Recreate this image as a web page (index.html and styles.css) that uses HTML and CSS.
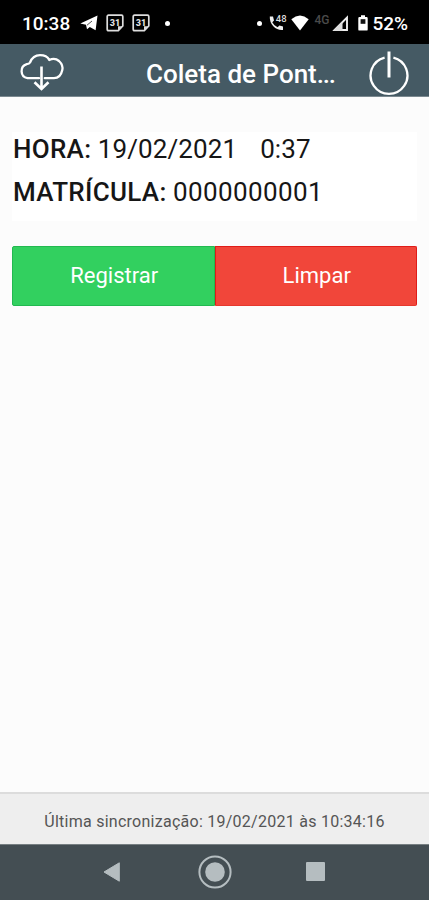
FILE: index.html
```html
<!DOCTYPE html>
<html lang="pt-BR">
<head>
  <meta charset="UTF-8" />
  <meta name="viewport" content="width=device-width, initial-scale=1.0"/>
  <title>Coleta de Ponto</title>
  <link rel="stylesheet" href="styles.css">
</head>
<body>

  <div class="status-bar">
    <span class="clock">10:38</span>
    <svg class="telegram" width="18" height="16" viewBox="0 0 18 16">
      <path d="M0.3 8.4L17.5 0.5L15.6 15.2L9.8 12L7 14.3L6 9.8Z" fill="#fff"/>
      <path d="M7 10.2L12 6" stroke="#000" stroke-width="0.7"/>
    </svg>
    <svg class="calendar" width="18" height="18" viewBox="0 0 18 18">
      <path d="M2.5 1.2H15.5Q16.8 1.2 16.8 2.5V12L12.3 16.6H2.5Q1.2 16.6 1.2 15.3V2.5Q1.2 1.2 2.5 1.2Z" fill="none" stroke="#ddd" stroke-width="1.7"/>
      <path d="M12 16.5V12.3H16.5Z" fill="#ddd"/>
      <text x="9" y="12.2" text-anchor="middle">31</text>
    </svg>
    <svg class="calendar" width="18" height="18" viewBox="0 0 18 18">
      <path d="M2.5 1.2H15.5Q16.8 1.2 16.8 2.5V12L12.3 16.6H2.5Q1.2 16.6 1.2 15.3V2.5Q1.2 1.2 2.5 1.2Z" fill="none" stroke="#ddd" stroke-width="1.7"/>
      <path d="M12 16.5V12.3H16.5Z" fill="#ddd"/>
      <text x="9" y="12.2" text-anchor="middle">31</text>
    </svg>
    <span class="dot"></span>

    <div class="status-right">
      <span class="dot"></span>
      <svg class="call" width="18" height="18" viewBox="0 0 18 18">
        <path d="M0.8 2.5H4L5 6.4L3.3 8.2Q5 11.8 8.6 13.3L10.4 11.6L14 12.6V16Q8.5 16.6 4.3 12.3Q0.5 8.2 0.8 2.5Z" fill="#eee"/>
        <text x="6.8" y="8.3">48</text>
      </svg>
      <svg class="wifi" width="18" height="16" viewBox="0 0 18 16">
        <path d="M0.3 4.2Q9 -3 17.7 4.2L9 15.6Z" fill="#fff"/>
      </svg>
      <span class="network">4G</span>
      <svg class="signal" width="17" height="17" viewBox="0 0 17 17">
        <path d="M2.6 15L15 2.6V15Z" fill="none" stroke="#eee" stroke-width="1.9"/>
        <path d="M1 15.8L10.5 6.3V15.8Z" fill="#ddd"/>
      </svg>
      <svg class="battery" width="10" height="16" viewBox="0 0 10 16">
        <path d="M3 0.3H7V2H8.6Q9.7 2 9.7 3.2V14.4Q9.7 15.6 8.6 15.6H1.4Q0.3 15.6 0.3 14.4V3.2Q0.3 2 1.4 2H3Z" fill="#fff"/>
        <rect x="2.6" y="4.2" width="4.8" height="4.6" fill="#111"/>
      </svg>
      <span class="percent">52%</span>
    </div>
  </div>

  <div class="header">
    <svg class="cloud" width="46" height="40" viewBox="0 0 46 40">
      <path d="M20 25.2H8.5A7.2 7.2 0 0 1 7.8 11.2Q10.2 11 11 9.5Q14 2.2 21 2.2Q27.8 2.2 30.3 7Q35.8 4.5 40 8Q44.3 12 43.3 17Q41.5 25.2 35 25.2H25.8" fill="none" stroke="#fff" stroke-width="2.3" stroke-linecap="round" stroke-linejoin="round"/>
      <path d="M22.5 13.5V34.5M15.5 29.2L22.5 36L29.5 29.2" fill="none" stroke="#fff" stroke-width="2.6"/>
    </svg>
    <h1>Coleta de Pont<span class="ellipsis">...</span></h1>
    <svg class="power" width="42" height="46" viewBox="0 0 42 46">
      <path d="M16.6 7.6A18.4 18.4 0 1 0 25.4 7.6" fill="none" stroke="#fff" stroke-width="2.3"/>
      <path d="M21 1.5V27.5" stroke="#fff" stroke-width="3"/>
    </svg>
  </div>

  <div class="content">
    <div class="info">
      <p class="hora"><b>HORA:</b> <span class="date">19/02/2021</span><span class="time">0:37</span></p>
      <p class="matricula"><b>MATRÍCULA:</b> <span class="number">0000000001</span></p>
    </div>
    <div class="buttons">
      <button class="registrar">Registrar</button>
      <button class="limpar">Limpar</button>
    </div>
  </div>

  <div class="footer">Última sincronização: 19/02/2021 às 10:34:16</div>

  <div class="nav-bar">
    <svg width="18" height="20" viewBox="0 0 18 20">
      <path d="M1 10L16.3 0.8V19.2Z" fill="#b5bdc0" stroke="#b5bdc0" stroke-linejoin="round"/>
    </svg>
    <svg class="home" width="34" height="34" viewBox="0 0 34 34">
      <circle cx="17" cy="17" r="15.6" fill="none" stroke="#b5bdc0" stroke-width="2"/>
      <circle cx="17" cy="17" r="9.8" fill="#b5bdc0"/>
    </svg>
    <span class="recent"></span>
  </div>

</body>
</html>
```

FILE: styles.css
```css
* {
  box-sizing: border-box;
}

body {
  margin: 0;
  height: 900px;
  display: flex;
  flex-direction: column;
  font-family: Roboto, Arial, sans-serif;
  background-color: #fcfcfc;
  color: #161616;
  overflow: hidden;
}

.status-bar {
  height: 44px;
  background-color: #000;
  color: #fff;
  display: flex;
  align-items: center;
  padding: 2px 21px 0 22px;
  font-size: 19px;
  font-weight: 500;
}

.clock {
  width: 58px;
}

.calendar {
  margin-left: 8px;
}

.calendar text {
  font-size: 9px;
  font-weight: 900;
  fill: #ddd;
}

.dot {
  width: 5px;
  height: 5px;
  border-radius: 50%;
  background-color: #fff;
}

.calendar + .dot {
  margin-left: 15px;
}

.calendar + .calendar {
  margin-left: 8px;
}

.status-right {
  margin-left: auto;
  display: flex;
  align-items: center;
}

.call {
  margin-left: 7px;
}

.call text {
  font-size: 9.5px;
  fill: #ddd;
}

.wifi {
  margin-left: 4px;
}

.network {
  margin: -7px 0 0 5px;
  width: 17px;
  font-size: 12px;
  color: #4a4a4a;
}

.signal {
  margin-left: 1px;
}

.battery {
  margin: 0 4px 0 9px;
}

.header {
  height: 53px;
  background-color: #455a64;
  border-bottom: 1px solid #7b8990;
  color: #fff;
  display: flex;
  align-items: center;
  padding: 6px 19px 0 19px;
}

.header h1 {
  margin: 2px 0 0 81px;
  font-size: 26px;
  font-weight: 500;
  white-space: nowrap;
}

.ellipsis {
  letter-spacing: -1.2px;
}

.power {
  margin-left: auto;
}

.content {
  flex: 1;
  padding: 35px 12px 0;
}

.info {
  height: 89px;
  background-color: #fff;
  padding: 0 1px;
}

.info p {
  margin: 0;
  height: 43px;
  line-height: 34px;
  font-size: 26px;
  white-space: nowrap;
}

.info b {
  font-weight: 500;
  letter-spacing: 0.3px;
}

.date,
.time {
  letter-spacing: 0.1px;
}

.time {
  margin-left: 23px;
}

.number {
  letter-spacing: 0.4px;
}

.buttons {
  display: flex;
  margin-top: 25px;
}

.buttons button {
  flex: 1;
  height: 60px;
  padding: 0 0 2px 2px;
  font-family: inherit;
  font-size: 22px;
  color: #fff;
}

.registrar {
  background-color: #32d05f;
  border: 1px solid #22b950;
  border-radius: 2px 0 0 2px;
}

.limpar {
  background-color: #f1463a;
  border: 1px solid #e01c18;
  border-bottom-color: #e5382e;
  border-radius: 0 2px 2px 0;
}

.footer {
  height: 52px;
  border-top: 2px solid #dcdcdc;
  background-color: #eee;
  color: #555;
  line-height: 56px;
  text-align: center;
  font-size: 16px;
  letter-spacing: 0.26px;
}

.nav-bar {
  height: 56px;
  background-color: #444e53;
  border-top: 1px solid #777f82;
  display: flex;
  align-items: center;
  padding: 0 0 2px 103px;
}

.home {
  margin-left: 77px;
}

.recent {
  width: 19px;
  height: 19px;
  margin-left: 74px;
  border-radius: 1px;
  background-color: #b5bdc0;
}
```
